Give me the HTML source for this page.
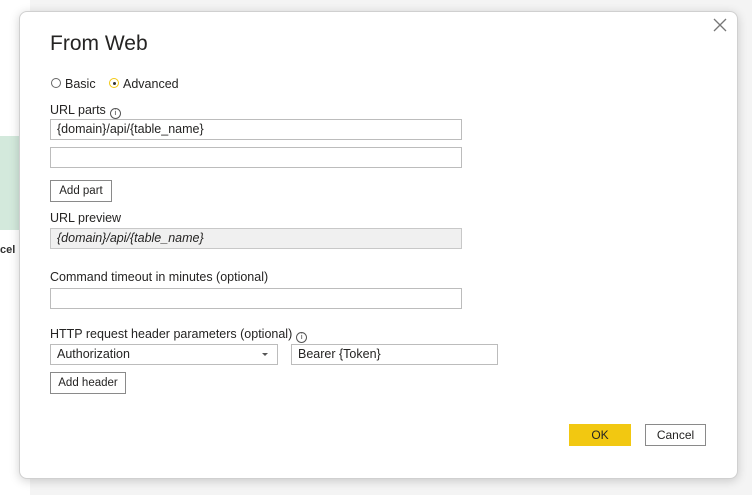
<!DOCTYPE html>
<html><head><style>
body{margin:0;width:752px;height:495px;background:#f4f4f4;position:relative;overflow:hidden;font-family:"Liberation Sans",sans-serif;font-size:12.5px;color:#252423}
.bgleft{position:absolute;left:0;top:0;width:30px;height:495px;background:#fff}
.green{position:absolute;left:0;top:136px;width:30px;height:94px;background:#d3e9dc}
.cel{position:absolute;left:0;top:244px;font-size:11px;font-weight:bold;color:#333}
.dlg{position:absolute;left:19px;top:11px;width:717px;height:466px;background:#fff;border:1px solid #d0d0d0;border-radius:8px;box-shadow:0 2px 10px rgba(0,0,0,.18)}
.a{position:absolute}
.inp{position:absolute;height:21px;border:1px solid #bcbcbc;box-sizing:border-box;padding-left:6px;line-height:19px;font-size:12.5px;background:#fff}
.btn{position:absolute;height:22px;border:1px solid #8a8a8a;box-sizing:border-box;background:#fff;text-align:center;line-height:20px;font-size:11.5px}
.info{display:inline-block;width:9px;height:9px;border:1px solid #555;border-radius:50%;font-size:7px;line-height:9px;text-align:center;vertical-align:-1px;margin-left:4px}
</style></head><body>
<div class="bgleft"></div><div class="green"></div><div class="cel">cel</div>
<div class="dlg"></div>
<div class="a" style="left:50px;top:32px;font-size:21px;color:#252423">From Web</div>
<svg class="a" style="left:713px;top:18px" width="14" height="14"><path d="M1 1L13 13M13 1L1 13" stroke="#777" stroke-width="1.3"/></svg>
<div class="a" style="left:51px;top:78px;width:8px;height:8px;border:1.5px solid #666;border-radius:50%"></div>
<div class="a" style="left:65px;top:77px">Basic</div>
<div class="a" style="left:109px;top:78px;width:8px;height:8px;border:1.5px solid #f2c811;border-radius:50%"></div>
<div class="a" style="left:113px;top:82px;width:3px;height:3px;background:#333;border-radius:50%"></div>
<div class="a" style="left:123px;top:77px">Advanced</div>
<div class="a" style="left:50px;top:103px">URL parts<span class="info">i</span></div>
<div class="inp" style="left:50px;top:119px;width:412px">{domain}/api/{table_name}</div>
<div class="inp" style="left:50px;top:147px;width:412px"></div>
<div class="btn" style="left:50px;top:180px;width:62px">Add part</div>
<div class="a" style="left:50px;top:211px">URL preview</div>
<div class="inp" style="left:50px;top:228px;width:412px;background:#f0f0f0;font-style:italic;border-color:#c8c8c8">{domain}/api/{table_name}</div>
<div class="a" style="left:50px;top:270px">Command timeout in minutes (optional)</div>
<div class="inp" style="left:50px;top:288px;width:412px"></div>
<div class="a" style="left:50px;top:327px">HTTP request header parameters (optional)<span class="info">i</span></div>
<div class="inp" style="left:50px;top:344px;width:228px">Authorization</div>
<div class="a" style="left:262px;top:353px;width:0;height:0;border-left:3px solid transparent;border-right:3px solid transparent;border-top:3px solid #555"></div>
<div class="inp" style="left:291px;top:344px;width:207px">Bearer {Token}</div>
<div class="btn" style="left:50px;top:372px;width:76px">Add header</div>
<div class="btn" style="left:569px;top:424px;width:62px;background:#f2c811;border-color:#f2c811;font-size:12px">OK</div>
<div class="btn" style="left:645px;top:424px;width:61px;font-size:12px">Cancel</div>
</body></html>
